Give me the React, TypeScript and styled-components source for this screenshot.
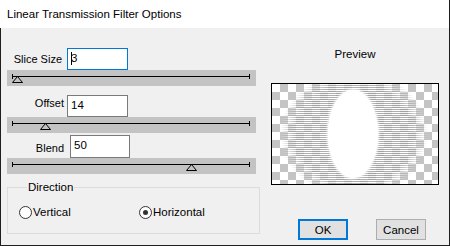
import React from 'react'
import styled, { createGlobalStyle } from 'styled-components'

const GlobalStyle = createGlobalStyle`
  html, body {
    margin: 0;
    padding: 0;
    background: #f0f0f0;
  }
  body {
    font-family: 'Liberation Sans', Arial, sans-serif;
    font-size: 11px;
    color: #000;
  }
`

// Window chrome

const Window = styled.div`
  width: 450px;
  height: 246px;
  box-sizing: border-box;
  display: flex;
  flex-direction: column;
  border-right: 1px solid #1e1e1e;
  overflow: hidden;
`

const TitleBar = styled.div`
  height: 28px;
  flex: none;
  display: flex;
  align-items: center;
  padding-left: 7px;
  background: #fff;
  font-size: 11.5px;
  color: #000;
`

const Body = styled.div`
  flex: 1;
  display: flex;
  background: #f0f0f0;
  border-left: 1px solid #1e1e1e;
  border-bottom: 1px solid #1e1e1e;
`

const LeftPane = styled.div`
  width: 253px;
  flex: none;
  display: flex;
  flex-direction: column;
  padding: 20px 0 0 6px;
`

const RightPane = styled.div`
  flex: 1;
  display: flex;
  flex-direction: column;
  align-items: flex-start;
  padding: 20px 0 0 11px;
`

// Field rows

const FieldRow = styled.div<{ $top: number }>`
  display: flex;
  align-items: center;
  margin-top: ${(p) => p.$top}px;
`

const FieldLabel = styled.span<{ $width: number; $raise?: number }>`
  width: ${(p) => p.$width}px;
  text-align: right;
  line-height: 13px;
  position: relative;
  top: ${(p) => -(p.$raise ?? 0)}px;
`

const TextField = styled.div<{ $focused?: boolean; $width: number; $height: number; $gap: number }>`
  box-sizing: border-box;
  width: ${(p) => p.$width}px;
  height: ${(p) => p.$height}px;
  margin-left: ${(p) => p.$gap}px;
  border: 1px solid ${(p) => (p.$focused ? '#0078d7' : '#7a7a7a')};
  background: #fff;
  padding: 3px 0 0 3px;
  font-size: 11.5px;
  line-height: 13px;
  display: flex;
  align-items: flex-start;
`

const Caret = styled.span`
  display: inline-block;
  width: 1px;
  height: 13px;
  background: #000;
  margin-right: -1px;
`

// Slider

const Track = styled.div`
  position: relative;
  width: 249px;
  height: 16px;
  background: #c3c3c3;
`

const Rail = styled.div`
  position: relative;
  margin: 6px 6px 0 5px;
  height: 1px;
  background: #000;

  &::before,
  &::after {
    content: '';
    position: absolute;
    top: -2px;
    width: 1px;
    height: 5px;
    background: #000;
  }
  &::before {
    left: 0;
  }
  &::after {
    right: 0;
  }
`

const Thumb = styled.svg`
  position: absolute;
  top: 6px;
  width: 11px;
  height: 7px;
`

const Slider: React.FC<{ value: number }> = ({ value }) => (
  <Track>
    <Rail />
    <Thumb viewBox="0 0 11 7" style={{ left: 5 + value * 238 - 5 }}>
      <polygon points="5.5,0.5 10.5,6.5 0.5,6.5" fill="none" stroke="#000" strokeWidth="1" />
    </Thumb>
  </Track>
)

// Direction group

const GroupBox = styled.fieldset`
  box-sizing: border-box;
  width: 253px;
  height: 53px;
  margin: 7px 0 0;
  padding: 0 0 0 11px;
  border: 1px solid #dcdcdc;
  min-width: 0;
`

const GroupLegend = styled.legend`
  margin-left: 8px;
  padding: 0 1px;
  line-height: 13px;
  font-size: 11.5px;
`

const RadioRow = styled.div`
  display: flex;
  align-items: center;
  margin-top: 12px;
`

const RadioOption = styled.label`
  width: 120px;
  display: flex;
  align-items: center;
  gap: 1px;
  font-size: 11.5px;
  line-height: 13px;
`

const RadioCircle = styled.span<{ $checked?: boolean }>`
  box-sizing: border-box;
  width: 13px;
  height: 13px;
  border-radius: 50%;
  border: 1px solid #333;
  background: #fff;
  display: flex;
  align-items: center;
  justify-content: center;

  &::after {
    content: '';
    display: ${(p) => (p.$checked ? 'block' : 'none')};
    width: 5px;
    height: 5px;
    border-radius: 50%;
    background: #333;
  }
`

// Preview

const PreviewLabel = styled.div`
  width: 168px;
  text-align: center;
  line-height: 13px;
  font-size: 11.5px;
`

const PreviewFrame = styled.div`
  box-sizing: border-box;
  width: 168px;
  height: 102px;
  margin-top: 22px;
  border: 1px solid #000;
  background: #fff;
  display: flex;
`

const ButtonRow = styled.div`
  display: flex;
  gap: 28px;
  margin: 34px 0 0 27px;
`

const DialogButton = styled.button<{ $default?: boolean }>`
  box-sizing: border-box;
  width: 50px;
  height: 21px;
  padding: 0;
  background: #e1e1e1;
  border: ${(p) => (p.$default ? '2px solid #0078d7' : '1px solid #adadad')};
  font-family: 'Liberation Sans', Arial, sans-serif;
  font-size: 11.5px;
  color: #000;
`

const PreviewImage: React.FC = () => (
  <svg width="166" height="100" viewBox="0 0 166 100">
    <defs>
      <pattern id="checker" width="16" height="16" patternUnits="userSpaceOnUse">
        <rect width="16" height="16" fill="#fff" />
        <rect x="8" y="0" width="8" height="8" fill="#c4c4c4" />
        <rect x="0" y="8" width="8" height="8" fill="#c4c4c4" />
      </pattern>
      <pattern id="stripes" width="4" height="2" patternUnits="userSpaceOnUse">
        <rect width="4" height="1" fill="#ffffff" />
        <rect y="1" width="4" height="1" fill="#9a9a9a" />
      </pattern>
      <radialGradient id="fade" cx="0.5" cy="0.5" r="0.5">
        <stop offset="0.8" stopColor="#fff" stopOpacity="1" />
        <stop offset="1" stopColor="#fff" stopOpacity="0" />
      </radialGradient>
      <mask id="stripeMask">
        <ellipse cx="82" cy="50" rx="74" ry="64" fill="url(#fade)" />
      </mask>
      <filter id="soft" x="-0.2" y="-0.2" width="1.4" height="1.4">
        <feGaussianBlur stdDeviation="1.2" />
      </filter>
    </defs>
    <rect width="166" height="100" fill="url(#checker)" />
    <rect width="166" height="100" fill="url(#stripes)" opacity="0.8" mask="url(#stripeMask)" />
    <ellipse cx="81" cy="50" rx="26" ry="45" fill="#fff" filter="url(#soft)" />
    <ellipse cx="81" cy="50" rx="25" ry="44" fill="#fff" />
  </svg>
)

export default function App() {
  return (
    <>
      <GlobalStyle />
      <Window>
        <TitleBar>Linear Transmission Filter Options</TitleBar>
        <Body>
          <LeftPane>
            <FieldRow $top={0}>
              <FieldLabel $width={55}>Slice Size</FieldLabel>
              <TextField $focused $width={61} $height={22} $gap={5}>
                <Caret />3
              </TextField>
            </FieldRow>
            <Slider value={0.019} />

            <FieldRow $top={9}>
              <FieldLabel $width={57} $raise={3}>Offset</FieldLabel>
              <TextField $width={61} $height={22} $gap={3}>
                14
              </TextField>
            </FieldRow>
            <Slider value={0.139} />

            <FieldRow $top={2}>
              <FieldLabel $width={57} $raise={-2}>Blend</FieldLabel>
              <TextField $width={60} $height={23} $gap={6}>
                50
              </TextField>
            </FieldRow>
            <Slider value={0.754} />

            <GroupBox>
              <GroupLegend>Direction</GroupLegend>
              <RadioRow>
                <RadioOption>
                  <RadioCircle />
                  Vertical
                </RadioOption>
                <RadioOption>
                  <RadioCircle $checked />
                  Horizontal
                </RadioOption>
              </RadioRow>
            </GroupBox>
          </LeftPane>

          <RightPane>
            <PreviewLabel>Preview</PreviewLabel>
            <PreviewFrame>
              <PreviewImage />
            </PreviewFrame>
            <ButtonRow>
              <DialogButton $default>OK</DialogButton>
              <DialogButton>Cancel</DialogButton>
            </ButtonRow>
          </RightPane>
        </Body>
      </Window>
    </>
  )
}
